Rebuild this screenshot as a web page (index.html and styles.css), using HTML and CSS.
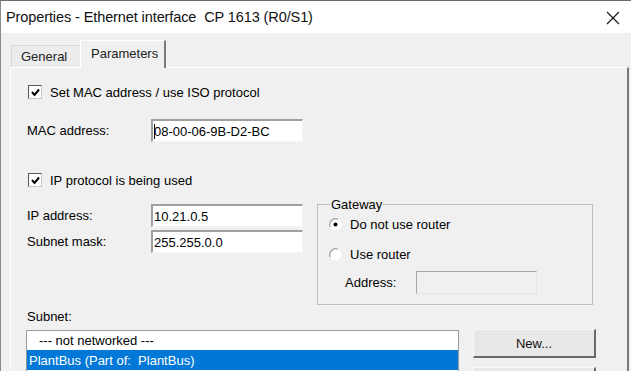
FILE: index.html
```html
<!DOCTYPE html>
<html>
<head>
<meta charset="utf-8">
<link rel="stylesheet" href="styles.css">
</head>
<body>
<div class="window">
  <div class="titlebar">
    <span class="title">Properties - Ethernet interface&nbsp; CP 1613 (R0/S1)</span>
    <svg class="close" width="14" height="14" viewBox="0 0 14 14"><path d="M1 1 L13 13 M13 1 L1 13" stroke="#111" stroke-width="1.1" fill="none"/></svg>
  </div>
  <div class="client">
    <div class="tabs">
      <div class="tab">General</div>
      <div class="tab active">Parameters</div>
    </div>
    <div class="pane">
      <div class="check-row first">
        <span class="checkbox"><svg width="11" height="11" viewBox="0 0 11 11"><path d="M2 5 L4.5 8 L9 2.5" stroke="#000" stroke-width="2" fill="none"/></svg></span>
        <span>Set MAC address / use ISO protocol</span>
      </div>
      <div class="field-row mac">
        <span class="label">MAC address:</span>
        <span class="input"><span class="caret"></span>08-00-06-9B-D2-BC</span>
      </div>
      <div class="check-row second">
        <span class="checkbox"><svg width="11" height="11" viewBox="0 0 11 11"><path d="M2 5 L4.5 8 L9 2.5" stroke="#000" stroke-width="2" fill="none"/></svg></span>
        <span>IP protocol is being used</span>
      </div>
      <div class="ip-area">
        <div class="ip-fields">
          <div class="field-row ip">
            <span class="label">IP address:</span>
            <span class="input">10.21.0.5</span>
          </div>
          <div class="field-row mask">
            <span class="label">Subnet mask:</span>
            <span class="input">255.255.0.0</span>
          </div>
        </div>
        <fieldset class="gateway">
          <legend>Gateway</legend>
          <div class="radio-row r1">
            <svg class="radio" width="13" height="13" viewBox="0 0 13 13"><circle cx="6.5" cy="6.5" r="6" fill="#fff"/><path d="M1.2 9 A6 6 0 0 1 9 1.2" stroke="#a0a0a0" stroke-width="1.2" fill="none"/><circle cx="6.5" cy="6.5" r="2" fill="#000"/></svg>
            <span>Do not use router</span>
          </div>
          <div class="radio-row r2">
            <svg class="radio" width="13" height="13" viewBox="0 0 13 13"><circle cx="6.5" cy="6.5" r="6" fill="#fff"/><path d="M1.2 9 A6 6 0 0 1 9 1.2" stroke="#a0a0a0" stroke-width="1.2" fill="none"/></svg>
            <span>Use router</span>
          </div>
          <div class="addr-row">
            <span class="addr-label">Address:</span>
            <span class="input disabled"></span>
          </div>
        </fieldset>
      </div>
      <div class="subnet-label">Subnet:</div>
      <div class="subnet-area">
        <div class="listbox">
          <div class="item">--- not networked ---</div>
          <div class="item selected">PlantBus (Part of:&nbsp; PlantBus)</div>
        </div>
        <div class="buttons">
          <div class="btn">New...</div>
          <div class="btn"></div>
        </div>
      </div>
    </div>
  </div>
</div>
</body>
</html>
```
FILE: styles.css
```css
* { box-sizing: border-box; }
html, body { margin: 0; padding: 0; }
body {
  width: 631px;
  height: 371px;
  overflow: hidden;
  font-family: "Liberation Sans", Arial, sans-serif;
  font-size: 13px;
  color: #000;
  background: #f0f0f0;
}
.window {
  width: 631px;
  height: 371px;
  border-top: 1px solid #6b6b6b;
  border-left: 1px solid #8a8a8a;
  display: flex;
  flex-direction: column;
  overflow: hidden;
}
.titlebar {
  height: 32px;
  background: #fff;
  display: flex;
  align-items: center;
  justify-content: space-between;
  padding: 0 11px 0 5px;
  flex: none;
}
.title {
  font-size: 14.5px;
  color: #111;
  letter-spacing: -0.1px;
}
.close { margin-top: 1px; }
.client {
  flex: 1;
  background: #f0f0f0;
  padding: 7px 0 0 9px;
  display: flex;
  flex-direction: column;
}
.tabs {
  display: flex;
  align-items: flex-end;
  height: 27px;
  padding-left: 1px;
}
.tab {
  height: 22px;
  padding: 0 0 0 9px;
  width: 69px;
  line-height: 22px;
  border: 1px solid #d9d9d9;
  border-bottom: none;
  border-right: none;
  background: #ececec;
  color: #222;
}
.tab.active {
  height: 28px;
  width: 86px;
  margin-bottom: -1px;
  line-height: 26px;
  padding-left: 10px;
  background: #f0f0f0;
  border: 1px solid #ffffff;
  border-right: 2px solid #7a7a7a;
  border-bottom: none;
  position: relative;
  z-index: 1;
}
.pane {
  flex: 1;
  border-top: 1px solid #ffffff;
  border-left: 1px solid #ffffff;
  border-right: 2px solid #7a7a7a;
  margin-right: 2px;
  padding: 16px 0 0 16px;
  display: flex;
  flex-direction: column;
}
.check-row {
  display: flex;
  align-items: center;
  height: 16px;
}
.check-row.second { margin-top: 30px; }
.checkbox {
  width: 14px;
  height: 14px;
  border: 1px solid #555;
  border-right-color: #c8c8c8;
  border-bottom-color: #c8c8c8;
  background: #fff;
  display: flex;
  align-items: center;
  justify-content: center;
  margin: 0 8px 0 1px;
}
.field-row {
  display: flex;
  align-items: center;
  height: 23px;
}
.field-row.mac { margin-top: 19px; }
.field-row.mask { margin-top: 3px; }
.label { width: 124px; }
.input {
  width: 152px;
  height: 23px;
  background: #fff;
  border: 2px solid #a0a0a0;
  border-right: 1px solid #f6f6f6;
  border-bottom: 1px solid #f6f6f6;
  display: flex;
  align-items: center;
  padding-left: 1px;
  font-size: 13px;
}
.caret {
  width: 1px;
  height: 15px;
  background: #000;
  margin-right: -1px;
}
.ip-area {
  display: flex;
  margin-top: 10px;
}
.ip-fields {
  padding-top: 6px;
  width: 290px;
}
.gateway {
  margin: 0;
  width: 276px;
  height: 107px;
  border: 1px solid #bdbdbd;
  border-radius: 0;
  padding: 5px 0 0 11px;
  display: flex;
  flex-direction: column;
}
.gateway legend {
  padding: 0 1px;
  margin-left: 1px;
  line-height: 13px;
}
.radio-row {
  display: flex;
  align-items: center;
  height: 16px;
}
.radio-row.r2 { margin-top: 14px; }
.radio { margin-right: 8px; }
.addr-row {
  display: flex;
  align-items: center;
  margin-top: 9px;
  padding-left: 16px;
}
.addr-label { width: 71px; }
.input.disabled {
  width: 121px;
  height: 23px;
  background: #f0f0f0;
  border: 1px solid #a8a8a8;
  border-right-color: #e4e4e4;
  border-bottom-color: #e4e4e4;
}
.subnet-label {
  margin-top: 4px;
  height: 16px;
  line-height: 16px;
}
.subnet-area {
  display: flex;
  margin-top: 5px;
}
.listbox {
  width: 433px;
  height: 60px;
  margin-left: -1px;
  background: #fff;
  border: 1px solid #9a9a9a;
  border-bottom: none;
  padding-top: 1px;
}
.item {
  height: 18px;
  line-height: 18px;
  padding-left: 12px;
}
.item.selected {
  background: #0078d7;
  color: #fff;
  padding-left: 2px;
  border-top: 1px solid #0078d7;
  height: 20px;
  line-height: 19px;
}
.buttons {
  margin-left: 14px;
  margin-top: -1px;
  display: flex;
  flex-direction: column;
  gap: 9px;
}
.btn {
  width: 123px;
  height: 29px;
  background: #e8e8e8;
  border: 1px solid #f8f8f8;
  border-right: 2px solid #6a6a6a;
  border-bottom: 2px solid #6a6a6a;
  display: flex;
  align-items: center;
  justify-content: center;
  color: #111;
}
```
